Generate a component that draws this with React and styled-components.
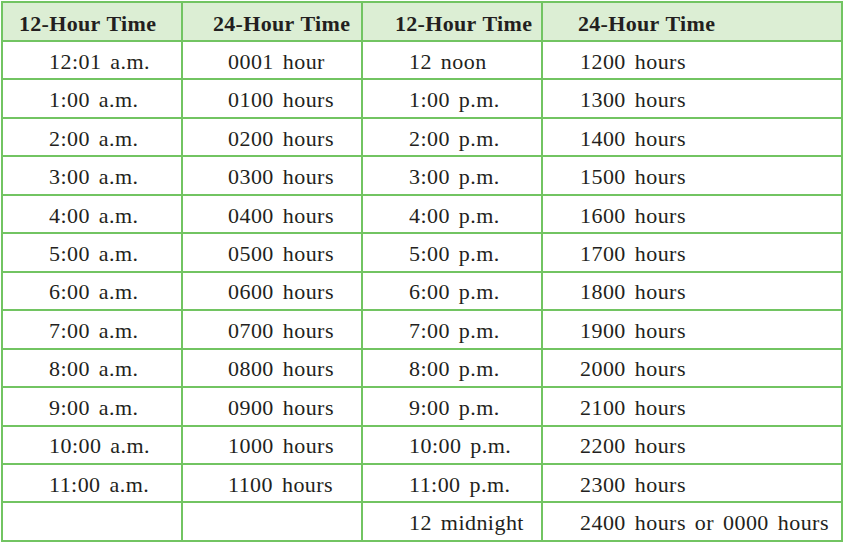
import React from "react";
import styled, { createGlobalStyle } from "styled-components";

const Global = createGlobalStyle`
  html, body { margin: 0; padding: 0; background: #ffffff; }
  body { font-family: "Liberation Serif", "Times New Roman", serif; color: #231f20; }
`;

const Page = styled.div`
  padding: 1px 0 0 1px;
`;

const Table = styled.div`
  display: grid;
  width: 842px;
  box-sizing: border-box;
  grid-template-columns: 178px 178px 178px 298px;
  grid-template-rows: 37px repeat(13, 36.46px);
  gap: 2px;
  padding: 2px;
  background: #72c462;
`;

const Cell = styled.div`
  display: flex;
  align-items: center;
  box-sizing: border-box;
  padding-left: ${(p) => p.$pad}px;
  padding-top: 3px;
  background: #ffffff;
  font-size: 22px;
  letter-spacing: 0.45px;
  word-spacing: 3px;
  white-space: nowrap;
  line-height: 1;
`;

const HeadCell = styled(Cell)`
  background: #dceed4;
  font-weight: bold;
  padding-top: 4px;
  letter-spacing: 0.3px;
  word-spacing: 1px;
`;

const headPads = [16, 30, 32, 35];
const bodyPads = [46, 45, 46, 37];
const heads = ["12-Hour Time", "24-Hour Time", "12-Hour Time", "24-Hour Time"];

const rows = [
  ["12:01 a.m.", "0001 hour", "12 noon", "1200 hours"],
  ["1:00 a.m.", "0100 hours", "1:00 p.m.", "1300 hours"],
  ["2:00 a.m.", "0200 hours", "2:00 p.m.", "1400 hours"],
  ["3:00 a.m.", "0300 hours", "3:00 p.m.", "1500 hours"],
  ["4:00 a.m.", "0400 hours", "4:00 p.m.", "1600 hours"],
  ["5:00 a.m.", "0500 hours", "5:00 p.m.", "1700 hours"],
  ["6:00 a.m.", "0600 hours", "6:00 p.m.", "1800 hours"],
  ["7:00 a.m.", "0700 hours", "7:00 p.m.", "1900 hours"],
  ["8:00 a.m.", "0800 hours", "8:00 p.m.", "2000 hours"],
  ["9:00 a.m.", "0900 hours", "9:00 p.m.", "2100 hours"],
  ["10:00 a.m.", "1000 hours", "10:00 p.m.", "2200 hours"],
  ["11:00 a.m.", "1100 hours", "11:00 p.m.", "2300 hours"],
  ["", "", "12 midnight", "2400 hours or 0000 hours"],
];

export default function App() {
  return (
    <Page>
      <Global />
      <Table>
        {heads.map((h, i) => (
          <HeadCell key={"h" + i} $pad={headPads[i]}>{h}</HeadCell>
        ))}
        {rows.map((r, ri) =>
          r.map((c, ci) => (
            <Cell key={ri + "-" + ci} $pad={bodyPads[ci]}>{c}</Cell>
          ))
        )}
      </Table>
    </Page>
  );
}
